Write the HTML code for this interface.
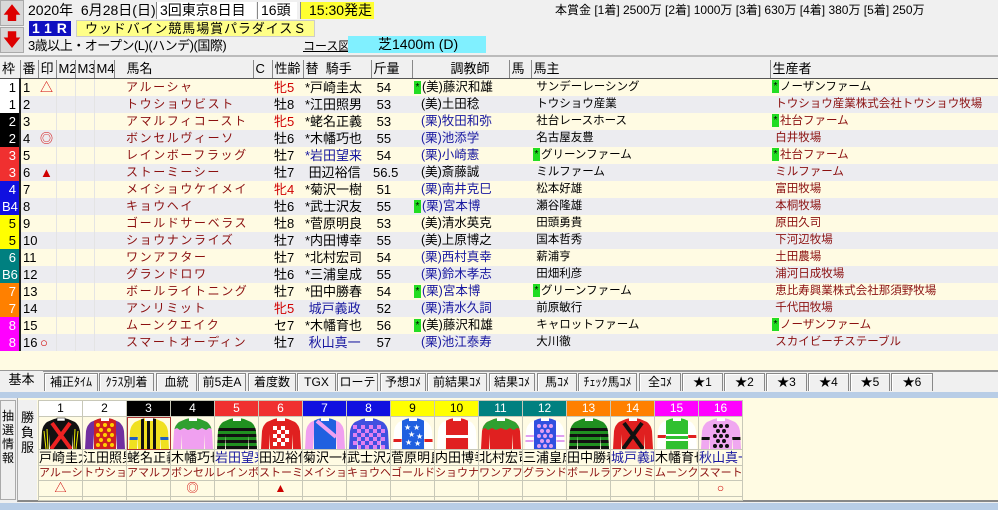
<!DOCTYPE html>
<html><head><meta charset="utf-8">
<style>
*{margin:0;padding:0;box-sizing:border-box}
body{width:998px;height:510px;overflow:hidden;background:#f0f0f0;font-family:"Liberation Sans","Noto Sans CJK JP",sans-serif;font-size:13px;color:#000;position:relative}
.a{position:absolute;white-space:nowrap}
table.t{position:absolute;left:0;top:60px;border-collapse:collapse;table-layout:fixed;width:998px}
.t td{height:17px;line-height:17px;padding:0 0 0 2px;overflow:hidden;white-space:nowrap;font-size:13px}
.t tr.h td{height:18px;background:#f0f0f0;border-left:1px solid #888;border-bottom:1px solid #555}
.t tr.c td{background:#fffbe3}
.t tr.g td{background:#ececf0}
.t td.m{border-left:1px solid #e4e4e4}
.t td:nth-child(14),.t td:nth-child(15){font-size:11.5px}
.t td:nth-child(12){font-size:12.5px}
.w{text-align:right;padding-right:3px!important;border-right:2px solid #222}
.hn{color:#8b1010;letter-spacing:1.6px;font-size:12px!important}
.r{color:#d00000}.b{color:#1818a0}.dr{color:#8b1010}
.s{background:#22dd22;color:#000;font-size:10px;display:inline-block;width:7px;line-height:13px;vertical-align:middle;text-align:center;margin-right:1px}
.tab{position:absolute;top:373px;height:18px;border:1px solid #888;border-bottom:none;background:#f0f0f0;font-size:12px;line-height:17px;text-align:center;box-shadow:inset 1px 1px #fff;overflow:hidden;white-space:nowrap}
.sk{position:absolute;top:400px;left:38px;border-collapse:collapse;table-layout:fixed;width:705px}
.sk td{width:44px;border:1px solid #c8c8b8;text-align:center;font-size:12px;overflow:hidden;white-space:nowrap;padding:0}
.sk tr.n td{height:16px;line-height:15px;font-size:12px}
.sk tr.p td{height:33px;background:#fffbe3}
.sk tr.p svg{display:block;margin:0 auto}
.sk tr.j td{height:16px;line-height:15px;font-size:13px;background:#fffbe3;text-align:left}
.sk tr.k td{height:15px;line-height:14px;font-size:11px;color:#8b1010;background:#fffbe3;text-align:left}
.sk tr.m td{height:16px;line-height:15px;background:#fffbe3;color:#c00}
.sk tr.e td{height:4px;background:#fffbe3}
</style></head><body>
<svg width="0" height="0" style="position:absolute"><defs><clipPath id="sh"><path d="M13,2 Q20,0 27,2 L34,5 Q38,8 39,14 L40,32 L32,32 L31,17 L31,32 L9,32 L9,17 L8,32 L0,32 L1,14 Q2,8 6,5 Z"/></clipPath></defs></svg>

<div class="a" style="left:0;top:0;width:24px;height:26px;background:#d8d8d8;border:1px solid #aaa;color:#d00;font-size:18px;line-height:24px;text-align:center">&#129093;</div>
<div class="a" style="left:0;top:27px;width:24px;height:26px;background:#d8d8d8;border:1px solid #aaa;color:#d00;font-size:18px;line-height:24px;text-align:center">&#129095;</div>
<div class="a" style="left:28px;top:2px;font-size:14px;line-height:16px">2020年&nbsp; 6月28日(日)</div>
<div class="a" style="left:156px;top:2px;width:100px;height:17px;background:#fff;border-left:1px solid #888;font-size:14px;line-height:16px;padding-left:3px">3回東京8日目</div>
<div class="a" style="left:257px;top:2px;width:40px;height:17px;background:#fff;border-left:1px solid #888;font-size:14px;line-height:16px;padding-left:3px">16頭</div>
<div class="a" style="left:300px;top:2px;width:74px;height:17px;background:#ffff30;border-left:1px solid #888;font-size:14px;line-height:16px;padding-left:8px">15:30発走</div>
<div class="a" style="left:29px;top:21px;width:42px;height:15px;background:#1010c0;color:#fff;font-weight:bold;font-size:14px;line-height:15px;padding-left:3px;letter-spacing:5px">11R</div>
<div class="a" style="left:76px;top:20px;width:239px;height:17px;background:#ffff88;border:1px solid #ccc;font-size:13px;line-height:16px;padding-left:8px;letter-spacing:0.9px;overflow:hidden">ウッドバイン競馬場賞パラダイスＳ</div>
<div class="a" style="left:28px;top:38px;font-size:13px;line-height:16px;letter-spacing:-0.5px">3歳以上・オープン(L)(ハンデ)(国際)</div>
<div class="a" style="left:303px;top:38px;font-size:12px;line-height:16px;text-decoration:underline">コース図</div>
<div class="a" style="left:348px;top:36px;width:138px;height:17px;background:#80f0ff;font-size:14px;line-height:17px;padding-left:30px">芝1400m (D)</div>
<div class="a" style="left:555px;top:3px;font-size:12px;line-height:14px">本賞金 [1着] 2500万 [2着] 1000万 [3着] 630万 [4着] 380万 [5着] 250万</div>
<div class="a" style="left:0;top:55px;width:998px;height:2px;background:#bbb"></div>

<table class="t">
<colgroup><col style="width:20px"><col style="width:18px"><col style="width:18px"><col style="width:19px"><col style="width:19px"><col style="width:20px"><col style="width:139px"><col style="width:19px"><col style="width:31px"><col style="width:68px"><col style="width:41px"><col style="width:97px"><col style="width:22px"><col style="width:239px"><col></colgroup>
<tr class="h"><td style="border-left:none">枠</td><td>番</td><td>印</td><td>M2</td><td>M3</td><td>M4</td><td style="padding-left:12px">馬名</td><td>C</td><td>性齢</td><td>替&nbsp; 騎手</td><td>斤量</td><td style="padding-left:38px;font-size:13px">調教師</td><td>馬</td><td style="font-size:13px">馬主</td><td style="font-size:13px">生産者</td></tr>
<tr class="c"><td class="w" style="background:#fff">1</td><td>1</td><td class="r">△</td><td class="m"></td><td class="m"></td><td class="m"></td><td class="hn" style="padding-left:12px">アルーシャ</td><td></td><td class="r">牝5</td><td>*戸崎圭太</td><td>&nbsp;54</td><td><span class="s">*</span>(美)藤沢和雄</td><td></td><td>&nbsp;サンデーレーシング</td><td><span class="s">*</span>ノーザンファーム</td></tr>
<tr class="g"><td class="w" style="background:#fff">1</td><td>2</td><td></td><td class="m"></td><td class="m"></td><td class="m"></td><td class="hn" style="padding-left:12px">トウショウビスト</td><td></td><td>牡8</td><td>*江田照男</td><td>&nbsp;53</td><td>&nbsp; (美)土田稔</td><td></td><td>&nbsp;トウショウ産業</td><td class="dr">&nbsp;トウショウ産業株式会社トウショウ牧場</td></tr>
<tr class="c"><td class="w" style="background:#000;color:#fff">2</td><td>3</td><td></td><td class="m"></td><td class="m"></td><td class="m"></td><td class="hn" style="padding-left:12px">アマルフィコースト</td><td></td><td class="r">牝5</td><td>*蛯名正義</td><td>&nbsp;53</td><td class="b">&nbsp; (栗)牧田和弥</td><td></td><td>&nbsp;社台レースホース</td><td class="dr"><span class="s">*</span>社台ファーム</td></tr>
<tr class="g"><td class="w" style="background:#000;color:#fff">2</td><td>4</td><td class="r">◎</td><td class="m"></td><td class="m"></td><td class="m"></td><td class="hn" style="padding-left:12px">ボンセルヴィーソ</td><td></td><td>牡6</td><td>*木幡巧也</td><td>&nbsp;55</td><td class="b">&nbsp; (栗)池添学</td><td></td><td>&nbsp;名古屋友豊</td><td class="dr">&nbsp;白井牧場</td></tr>
<tr class="c"><td class="w" style="background:#f03030;color:#fff">3</td><td>5</td><td></td><td class="m"></td><td class="m"></td><td class="m"></td><td class="hn" style="padding-left:12px">レインボーフラッグ</td><td></td><td>牡7</td><td class="b">*岩田望来</td><td>&nbsp;54</td><td class="b">&nbsp; (栗)小崎憲</td><td></td><td><span class="s">*</span>グリーンファーム</td><td class="dr"><span class="s">*</span>社台ファーム</td></tr>
<tr class="g"><td class="w" style="background:#f03030;color:#fff">3</td><td>6</td><td class="r">▲</td><td class="m"></td><td class="m"></td><td class="m"></td><td class="hn" style="padding-left:12px">ストーミーシー</td><td></td><td>牡7</td><td>&nbsp;田辺裕信</td><td>56.5</td><td>&nbsp; (美)斎藤誠</td><td></td><td>&nbsp;ミルファーム</td><td class="dr">&nbsp;ミルファーム</td></tr>
<tr class="c"><td class="w" style="background:#1010e0;color:#fff">4</td><td>7</td><td></td><td class="m"></td><td class="m"></td><td class="m"></td><td class="hn" style="padding-left:12px">メイショウケイメイ</td><td></td><td class="r">牝4</td><td>*菊沢一樹</td><td>&nbsp;51</td><td class="b">&nbsp; (栗)南井克巳</td><td></td><td>&nbsp;松本好雄</td><td class="dr">&nbsp;富田牧場</td></tr>
<tr class="g"><td class="w" style="background:#1010e0;color:#fff">B4</td><td>8</td><td></td><td class="m"></td><td class="m"></td><td class="m"></td><td class="hn" style="padding-left:12px">キョウヘイ</td><td></td><td>牡6</td><td>*武士沢友</td><td>&nbsp;55</td><td class="b"><span class="s">*</span>(栗)宮本博</td><td></td><td>&nbsp;瀬谷隆雄</td><td class="dr">&nbsp;本桐牧場</td></tr>
<tr class="c"><td class="w" style="background:#ffff00">5</td><td>9</td><td></td><td class="m"></td><td class="m"></td><td class="m"></td><td class="hn" style="padding-left:12px">ゴールドサーベラス</td><td></td><td>牡8</td><td>*菅原明良</td><td>&nbsp;53</td><td>&nbsp; (美)清水英克</td><td></td><td>&nbsp;田頭勇貴</td><td class="dr">&nbsp;原田久司</td></tr>
<tr class="g"><td class="w" style="background:#ffff00">5</td><td>10</td><td></td><td class="m"></td><td class="m"></td><td class="m"></td><td class="hn" style="padding-left:12px">ショウナンライズ</td><td></td><td>牡7</td><td>*内田博幸</td><td>&nbsp;55</td><td>&nbsp; (美)上原博之</td><td></td><td>&nbsp;国本哲秀</td><td class="dr">&nbsp;下河辺牧場</td></tr>
<tr class="c"><td class="w" style="background:#008080;color:#fff">6</td><td>11</td><td></td><td class="m"></td><td class="m"></td><td class="m"></td><td class="hn" style="padding-left:12px">ワンアフター</td><td></td><td>牡7</td><td>*北村宏司</td><td>&nbsp;54</td><td class="b">&nbsp; (栗)西村真幸</td><td></td><td>&nbsp;薪浦亨</td><td class="dr">&nbsp;土田農場</td></tr>
<tr class="g"><td class="w" style="background:#008080;color:#fff">B6</td><td>12</td><td></td><td class="m"></td><td class="m"></td><td class="m"></td><td class="hn" style="padding-left:12px">グランドロワ</td><td></td><td>牡6</td><td>*三浦皇成</td><td>&nbsp;55</td><td class="b">&nbsp; (栗)鈴木孝志</td><td></td><td>&nbsp;田畑利彦</td><td class="dr">&nbsp;浦河日成牧場</td></tr>
<tr class="c"><td class="w" style="background:#ff8000;color:#fff">7</td><td>13</td><td></td><td class="m"></td><td class="m"></td><td class="m"></td><td class="hn" style="padding-left:12px">ボールライトニング</td><td></td><td>牡7</td><td>*田中勝春</td><td>&nbsp;54</td><td class="b"><span class="s">*</span>(栗)宮本博</td><td></td><td><span class="s">*</span>グリーンファーム</td><td class="dr">&nbsp;恵比寿興業株式会社那須野牧場</td></tr>
<tr class="g"><td class="w" style="background:#ff8000;color:#fff">7</td><td>14</td><td></td><td class="m"></td><td class="m"></td><td class="m"></td><td class="hn" style="padding-left:12px">アンリミット</td><td></td><td class="r">牝5</td><td class="b">&nbsp;城戸義政</td><td>&nbsp;52</td><td class="b">&nbsp; (栗)清水久詞</td><td></td><td>&nbsp;前原敏行</td><td class="dr">&nbsp;千代田牧場</td></tr>
<tr class="c"><td class="w" style="background:#ff00ff;color:#fff">8</td><td>15</td><td></td><td class="m"></td><td class="m"></td><td class="m"></td><td class="hn" style="padding-left:12px">ムーンクエイク</td><td></td><td>セ7</td><td>*木幡育也</td><td>&nbsp;56</td><td><span class="s">*</span>(美)藤沢和雄</td><td></td><td>&nbsp;キャロットファーム</td><td class="dr"><span class="s">*</span>ノーザンファーム</td></tr>
<tr class="g"><td class="w" style="background:#ff00ff;color:#fff">8</td><td>16</td><td class="r">○</td><td class="m"></td><td class="m"></td><td class="m"></td><td class="hn" style="padding-left:12px">スマートオーディン</td><td></td><td>牡7</td><td class="b">&nbsp;秋山真一</td><td>&nbsp;57</td><td class="b">&nbsp; (栗)池江泰寿</td><td></td><td>&nbsp;大川徹</td><td class="dr">&nbsp;スカイビーチステーブル</td></tr>
<tr class="c"><td colspan="15" style="height:20px;border-top:none"></td></tr>
</table>

<div class="a" style="left:0;top:370px;width:998px;height:2px;background:#999"></div>
<div class="a" style="left:0;top:372px;width:998px;height:20px;background:#f0f0f0"></div>
<div class="tab" style="left:0;width:43px;top:371px;height:21px;border:none;box-shadow:none;font-size:13px">基本</div>
<div class="tab" style="left:44px;width:54px">補正ﾀｲﾑ</div>
<div class="tab" style="left:99px;width:55px">ｸﾗｽ別着</div>
<div class="tab" style="left:156px;width:41px">血統</div>
<div class="tab" style="left:198px;width:48px">前5走A</div>
<div class="tab" style="left:248px;width:48px">着度数</div>
<div class="tab" style="left:297px;width:39px">TGX</div>
<div class="tab" style="left:337px;width:41px">ローテ</div>
<div class="tab" style="left:380px;width:46px">予想ｺﾒ</div>
<div class="tab" style="left:427px;width:60px">前結果ｺﾒ</div>
<div class="tab" style="left:489px;width:46px">結果ｺﾒ</div>
<div class="tab" style="left:537px;width:40px">馬ｺﾒ</div>
<div class="tab" style="left:578px;width:59px">ﾁｪｯｸ馬ｺﾒ</div>
<div class="tab" style="left:639px;width:42px">全ｺﾒ</div>
<div class="tab" style="left:682px;width:41px">★1</div>
<div class="tab" style="left:724px;width:41px">★2</div>
<div class="tab" style="left:766px;width:41px">★3</div>
<div class="tab" style="left:808px;width:41px">★4</div>
<div class="tab" style="left:850px;width:40px">★5</div>
<div class="tab" style="left:891px;width:42px">★6</div>
<div class="a" style="left:0;top:392px;width:998px;height:6px;background:#b8cde6"></div>
<div class="a" style="left:0;top:398px;width:998px;height:105px;background:#f0f0f0"></div>
<div class="a" style="left:17px;top:398px;width:981px;height:104px;background:#fffbe3;border-left:1px solid #aaa;border-bottom:2px solid #888"></div>
<div class="a" style="left:0;top:400px;width:16px;height:100px;border:1px solid #aaa;background:#f0f0f0;font-size:12px;line-height:14px;text-align:center;padding-top:8px;white-space:normal">抽<br>選<br>情<br>報</div>
<div class="a" style="left:18px;top:400px;width:19px;height:100px;background:#f0f0f0;font-size:13px;line-height:15px;text-align:center;padding-top:10px;white-space:normal">勝<br>負<br>服</div>
<div class="a" style="left:0;top:503px;width:998px;height:7px;background:#b8cde6"></div>

<table class="sk">
<colgroup><col style="width:44px"><col style="width:44px"><col style="width:44px"><col style="width:44px"><col style="width:44px"><col style="width:44px"><col style="width:44px"><col style="width:44px"><col style="width:44px"><col style="width:44px"><col style="width:44px"><col style="width:44px"><col style="width:44px"><col style="width:44px"><col style="width:44px"><col style="width:44px"></colgroup>
<tr class="n">
<td style="background:#fff">1</td><td style="background:#fff">2</td><td style="background:#000;color:#fff">3</td><td style="background:#000;color:#fff">4</td><td style="background:#f03030;color:#fff">5</td><td style="background:#f03030;color:#fff">6</td><td style="background:#1010e0;color:#fff">7</td><td style="background:#1010e0;color:#fff">8</td><td style="background:#ffff00">9</td><td style="background:#ffff00">10</td><td style="background:#008080;color:#fff">11</td><td style="background:#008080;color:#fff">12</td><td style="background:#ff8000;color:#fff">13</td><td style="background:#ff8000;color:#fff">14</td><td style="background:#ff00ff;color:#fff">15</td><td style="background:#ff00ff;color:#fff">16</td></tr>
<tr class="p">
<td><svg width="40" height="32" viewBox="0 0 40 32"><g clip-path="url(#sh)"><rect width="40" height="32" fill="#111"/><path d="M3,14 L5,32 M6,12 L7,32 M34,12 L33,32 M37,14 L35,32" stroke="#ee0" stroke-width="1"/><path d="M11,6 L30,32 M29,6 L10,32" stroke="#e22" stroke-width="4"/></g><rect x="16" y="1" width="8" height="3" fill="#fff" stroke="#000" stroke-width=".5"/></svg></td>
<td><svg width="40" height="32" viewBox="0 0 40 32"><g clip-path="url(#sh)"><rect width="40" height="32" fill="#7030a0"/><rect x="9" width="22" height="32" fill="#d02020"/><g fill="#ffd000"><circle cx="13" cy="8" r="2"/><circle cx="20" cy="8" r="2"/><circle cx="27" cy="8" r="2"/><circle cx="16" cy="13" r="2"/><circle cx="24" cy="13" r="2"/><circle cx="13" cy="18" r="2"/><circle cx="20" cy="18" r="2"/><circle cx="27" cy="18" r="2"/><circle cx="16" cy="23" r="2"/><circle cx="24" cy="23" r="2"/><circle cx="13" cy="28" r="2"/><circle cx="20" cy="28" r="2"/><circle cx="27" cy="28" r="2"/></g></g><rect x="16" y="1" width="8" height="3" fill="#fff"/></svg></td>
<td style="outline:1px solid #a33;outline-offset:-1px"><svg width="40" height="32" viewBox="0 0 40 32"><g clip-path="url(#sh)"><rect width="40" height="32" fill="#f0e020"/><g fill="#111"><rect x="12" width="3" height="32"/><rect x="18" width="3" height="32"/><rect x="24" width="3" height="32"/></g><rect x="0" y="20" width="9" height="3" fill="#2060c0"/><rect x="31" y="20" width="9" height="3" fill="#2060c0"/></g><rect x="16" y="1" width="8" height="3" fill="#fff"/></svg></td>
<td><svg width="40" height="32" viewBox="0 0 40 32"><g clip-path="url(#sh)"><rect width="40" height="32" fill="#f0a0f0"/><path d="M0,0 H40 V12 L36,11 L33,13 L29,11 L25,13 L20,11 L15,13 L11,11 L7,13 L4,11 L0,13 Z" fill="#30a030"/></g><rect x="16" y="1" width="8" height="3" fill="#fff"/></svg></td>
<td><svg width="40" height="32" viewBox="0 0 40 32"><g clip-path="url(#sh)"><rect width="40" height="32" fill="#209020"/><g fill="#111"><rect y="11" width="40" height="3"/><rect y="17" width="40" height="3"/><rect y="23" width="40" height="3"/><rect y="29" width="40" height="3"/></g></g><rect x="16" y="1" width="8" height="3" fill="#fff"/></svg></td>
<td><svg width="40" height="32" viewBox="0 0 40 32"><g clip-path="url(#sh)"><rect width="40" height="32" fill="#e02020"/><g fill="#fff"><rect x="12" y="9" width="4" height="4"/><rect x="20" y="9" width="4" height="4"/><rect x="16" y="13" width="4" height="4"/><rect x="24" y="13" width="4" height="4"/><rect x="12" y="17" width="4" height="4"/><rect x="20" y="17" width="4" height="4"/><rect x="16" y="21" width="4" height="4"/><rect x="24" y="21" width="4" height="4"/><rect x="12" y="25" width="4" height="4"/><rect x="20" y="25" width="4" height="4"/></g></g><rect x="16" y="1" width="8" height="3" fill="#fff"/></svg></td>
<td><svg width="40" height="32" viewBox="0 0 40 32"><g clip-path="url(#sh)"><rect width="40" height="32" fill="#f0a0f0"/><rect x="9" width="22" height="32" fill="#2060e0"/><path d="M12,4 L31,20" stroke="#f0a0f0" stroke-width="4"/></g><rect x="16" y="1" width="8" height="3" fill="#fff"/></svg></td>
<td><svg width="40" height="32" viewBox="0 0 40 32"><g clip-path="url(#sh)"><rect width="40" height="32" fill="#4050e0"/><g fill="#e080f0"><rect x="4" y="8" width="4" height="4"/><rect x="12" y="8" width="4" height="4"/><rect x="20" y="8" width="4" height="4"/><rect x="28" y="8" width="4" height="4"/><rect x="8" y="12" width="4" height="4"/><rect x="16" y="12" width="4" height="4"/><rect x="24" y="12" width="4" height="4"/><rect x="32" y="12" width="4" height="4"/><rect x="4" y="16" width="4" height="4"/><rect x="12" y="16" width="4" height="4"/><rect x="20" y="16" width="4" height="4"/><rect x="28" y="16" width="4" height="4"/><rect x="8" y="20" width="4" height="4"/><rect x="16" y="20" width="4" height="4"/><rect x="24" y="20" width="4" height="4"/><rect x="32" y="20" width="4" height="4"/><rect x="4" y="24" width="4" height="4"/><rect x="12" y="24" width="4" height="4"/><rect x="20" y="24" width="4" height="4"/><rect x="28" y="24" width="4" height="4"/><rect x="8" y="28" width="4" height="4"/><rect x="16" y="28" width="4" height="4"/><rect x="24" y="28" width="4" height="4"/><rect x="32" y="28" width="4" height="4"/></g></g><rect x="16" y="1" width="8" height="3" fill="#fff"/></svg></td>
<td><svg width="40" height="32" viewBox="0 0 40 32"><g clip-path="url(#sh)"><rect width="40" height="32" fill="#fff"/><rect x="9" width="22" height="32" fill="#2060e0"/><rect x="0" y="22" width="9" height="3" fill="#e02020"/><rect x="31" y="22" width="9" height="3" fill="#e02020"/><g fill="#fff" font-size="8" font-family="DejaVu Sans"><text x="11" y="13">★</text><text x="20" y="13">★</text><text x="15" y="20">★</text><text x="23" y="22">★</text><text x="12" y="28">★</text><text x="21" y="29">★</text></g></g><rect x="16" y="1" width="8" height="3" fill="#fff"/></svg></td>
<td><svg width="40" height="32" viewBox="0 0 40 32"><g clip-path="url(#sh)"><rect width="40" height="32" fill="#fff"/><rect x="9" width="22" height="32" fill="#e02020"/><rect x="9" y="18" width="22" height="3" fill="#fff"/></g><rect x="16" y="1" width="8" height="3" fill="#fff"/></svg></td>
<td><svg width="40" height="32" viewBox="0 0 40 32"><g clip-path="url(#sh)"><rect width="40" height="32" fill="#e02020"/><path d="M0,0 H40 V12 L36,11 L33,13 L29,11 L25,13 L20,11 L15,13 L11,11 L7,13 L4,11 L0,13 Z" fill="#30a030"/></g><rect x="16" y="1" width="8" height="3" fill="#fff"/></svg></td>
<td><svg width="40" height="32" viewBox="0 0 40 32"><g clip-path="url(#sh)"><rect width="40" height="32" fill="#fff"/><rect x="0" y="18" width="9" height="2" fill="#e0a0f0"/><rect x="31" y="18" width="9" height="2" fill="#e0a0f0"/><rect x="0" y="23" width="9" height="2" fill="#e0a0f0"/><rect x="31" y="23" width="9" height="2" fill="#e0a0f0"/><rect x="9" width="22" height="32" fill="#3050e0"/><g fill="#e0a0f0"><circle cx="14" cy="9" r="2"/><circle cx="20" cy="9" r="2"/><circle cx="26" cy="9" r="2"/><circle cx="17" cy="14" r="2"/><circle cx="23" cy="14" r="2"/><circle cx="14" cy="19" r="2"/><circle cx="20" cy="19" r="2"/><circle cx="26" cy="19" r="2"/><circle cx="17" cy="24" r="2"/><circle cx="23" cy="24" r="2"/><circle cx="14" cy="29" r="2"/><circle cx="20" cy="29" r="2"/><circle cx="26" cy="29" r="2"/></g></g><rect x="16" y="1" width="8" height="3" fill="#fff"/></svg></td>
<td><svg width="40" height="32" viewBox="0 0 40 32"><g clip-path="url(#sh)"><rect width="40" height="32" fill="#209020"/><g fill="#111"><rect y="11" width="40" height="3"/><rect y="17" width="40" height="3"/><rect y="23" width="40" height="3"/><rect y="29" width="40" height="3"/></g></g><rect x="16" y="1" width="8" height="3" fill="#fff"/></svg></td>
<td><svg width="40" height="32" viewBox="0 0 40 32"><g clip-path="url(#sh)"><rect width="40" height="32" fill="#e02020"/><path d="M11,6 L30,32 M29,6 L10,32" stroke="#111" stroke-width="4"/></g><rect x="16" y="1" width="8" height="3" fill="#fff"/></svg></td>
<td><svg width="40" height="32" viewBox="0 0 40 32"><g clip-path="url(#sh)"><rect width="40" height="32" fill="#fff"/><rect x="0" y="18" width="9" height="3" fill="#e02020"/><rect x="31" y="18" width="9" height="3" fill="#e02020"/><rect x="9" width="22" height="32" fill="#30c030"/><rect x="9" y="17" width="22" height="2" fill="#fff"/><rect x="9" y="22" width="22" height="2" fill="#fff"/></g><rect x="16" y="1" width="8" height="3" fill="#fff"/></svg></td>
<td><svg width="40" height="32" viewBox="0 0 40 32"><g clip-path="url(#sh)"><rect width="40" height="32" fill="#f0a8f0"/><rect x="0" y="20" width="9" height="3" fill="#111"/><rect x="31" y="20" width="9" height="3" fill="#111"/><g fill="#111"><circle cx="14" cy="9" r="2"/><circle cx="20" cy="9" r="2"/><circle cx="26" cy="9" r="2"/><circle cx="17" cy="14" r="2"/><circle cx="23" cy="14" r="2"/><circle cx="14" cy="19" r="2"/><circle cx="20" cy="19" r="2"/><circle cx="26" cy="19" r="2"/><circle cx="17" cy="24" r="2"/><circle cx="23" cy="24" r="2"/><circle cx="14" cy="29" r="2"/><circle cx="20" cy="29" r="2"/><circle cx="26" cy="29" r="2"/></g></g><rect x="16" y="1" width="8" height="3" fill="#fff"/></svg></td>
</tr>
<tr class="j"><td>戸崎圭太</td><td>江田照男</td><td>蛯名正義</td><td>木幡巧也</td><td style="color:#1818a0">岩田望来</td><td>田辺裕信</td><td>菊沢一樹</td><td>武士沢友</td><td>菅原明良</td><td>内田博幸</td><td>北村宏司</td><td>三浦皇成</td><td>田中勝春</td><td style="color:#1818a0">城戸義政</td><td>木幡育也</td><td style="color:#1818a0">秋山真一</td></tr>
<tr class="k"><td>アルーシャ</td><td>トウショウビ</td><td>アマルフィコ</td><td>ボンセルヴ</td><td>レインボー</td><td>ストーミー</td><td>メイショウ</td><td>キョウヘイ</td><td>ゴールドサ</td><td>ショウナン</td><td>ワンアフタ</td><td>グランドロ</td><td>ボールライ</td><td>アンリミット</td><td>ムーンクエ</td><td>スマートオ</td></tr>
<tr class="m"><td>△</td><td></td><td></td><td>◎</td><td></td><td>▲</td><td></td><td></td><td></td><td></td><td></td><td></td><td></td><td></td><td></td><td>○</td></tr>
<tr class="e"><td></td><td></td><td></td><td></td><td></td><td></td><td></td><td></td><td></td><td></td><td></td><td></td><td></td><td></td><td></td><td></td></tr>
</table>
</body></html>
